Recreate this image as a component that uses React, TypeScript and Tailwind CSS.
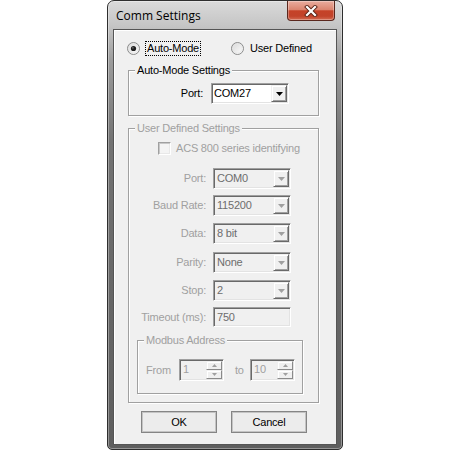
import React from "react";

function Radio({ checked, id }: { checked: boolean; id: string }) {
  return (
    <svg width="13" height="13" viewBox="0 0 13 13" className="shrink-0">
      <defs>
        <linearGradient id={id} x1="0" y1="0" x2="1" y2="1">
          <stop offset="0" stopColor="#d6d6d6" />
          <stop offset="1" stopColor="#ffffff" />
        </linearGradient>
      </defs>
      <circle cx="6.5" cy="6.5" r="6" fill={`url(#${id})`} stroke="#8a8b8b" />
      <circle cx="6.5" cy="6.5" r="4.6" fill="none" stroke="#e6e6e6" strokeWidth="0.8" />
      {checked && <circle cx="6.5" cy="6.5" r="2.6" fill="#1e1e1e" />}
      {checked && <circle cx="5.9" cy="5.8" r="0.9" fill="#6a6a6a" />}
    </svg>
  );
}

function Tri({ color, w = 7, h = 4 }: { color: string; w?: number; h?: number }) {
  return (
    <svg width={w} height={h} viewBox={`0 0 ${w} ${h}`}>
      <polygon points={`0,0 ${w},0 ${w / 2},${h}`} fill={color} />
    </svg>
  );
}

function TriUp({ color }: { color: string }) {
  return (
    <svg width="5" height="3" viewBox="0 0 5 3">
      <polygon points="0,3 5,3 2.5,0" fill={color} />
    </svg>
  );
}

function DropBtn({ enabled }: { enabled: boolean }) {
  return (
    <div className="w-[16px] h-full shrink-0 flex items-center justify-center bg-[#f0f0f0] border border-t-[#f0f0f0] border-l-[#f0f0f0] border-r-[#696969] border-b-[#696969] shadow-[inset_1px_1px_0_#ffffff,inset_-1px_-1px_0_#a0a0a0]">
      <Tri color={enabled ? "#000000" : "#a0a0a0"} />
    </div>
  );
}

function Combo({ value, enabled }: { value: string; enabled: boolean }) {
  return (
    <div
      className={
        enabled
          ? "flex h-[21px] w-[78px] shrink-0 border border-t-[#a0a0a0] border-l-[#a0a0a0] border-r-white border-b-white shadow-[inset_1px_1px_0_#696969,inset_-1px_-1px_0_#e3e3e3] p-[1px] bg-white"
          : "flex h-[21px] w-[78px] shrink-0 border border-t-[#a0a0a0] border-l-[#a0a0a0] border-r-white border-b-white shadow-[inset_1px_1px_0_#696969,inset_-1px_-1px_0_#e3e3e3] p-[1px] bg-[#f0f0f0]"
      }
    >
      <span
        className={
          enabled
            ? "flex-1 pl-[1px] leading-[17px] text-black"
            : "flex-1 pl-[2px] leading-[17px] text-[#6d6d6d]"
        }
      >
        {value}
      </span>
      <DropBtn enabled={enabled} />
    </div>
  );
}

function Edit({ value }: { value: string }) {
  return (
    <div className="flex h-[20px] w-[78px] shrink-0 border border-t-[#a0a0a0] border-l-[#a0a0a0] border-r-white border-b-white shadow-[inset_1px_1px_0_#696969,inset_-1px_-1px_0_#e3e3e3] p-[1px] bg-[#f0f0f0]">
      <span className="flex-1 pl-[2px] leading-[16px] text-[#6d6d6d]">{value}</span>
    </div>
  );
}

function SpinBtn({ up }: { up: boolean }) {
  return (
    <div className="h-[9px] w-full flex items-center justify-center bg-[#f0f0f0] border border-t-[#f0f0f0] border-l-[#f0f0f0] border-r-[#8a8a8a] border-b-[#8a8a8a] shadow-[inset_1px_1px_0_#ffffff]">
      {up ? <TriUp color="#a0a0a0" /> : <Tri color="#a0a0a0" w={5} h={3} />}
    </div>
  );
}

function Spin({ value }: { value: string }) {
  return (
    <div className="flex h-[22px] w-[45px] shrink-0 border border-t-[#a0a0a0] border-l-[#a0a0a0] border-r-white border-b-white shadow-[inset_1px_1px_0_#696969,inset_-1px_-1px_0_#e3e3e3] p-[1px] bg-[#f0f0f0]">
      <span className="flex-1 pl-[2px] leading-[17px] text-[#a0a0a0]">{value}</span>
      <div className="w-[16px] h-full flex flex-col bg-white">
        <SpinBtn up />
        <SpinBtn up={false} />
      </div>
    </div>
  );
}

function Button({ label }: { label: string }) {
  return (
    <div className="h-[22px] w-[76px] flex items-center justify-center border border-[#858585] bg-[#ececec] shadow-[inset_0_0_0_1px_#c4c4c4] text-black">
      {label}
    </div>
  );
}

function Row({ label, children, mt }: { label: string; children: React.ReactNode; mt: string }) {
  return (
    <div className={`flex items-center ${mt}`}>
      <span className="w-[77px] text-right text-[#a0a0a0] whitespace-nowrap">{label}</span>
      <div className="ml-[7px]">{children}</div>
    </div>
  );
}

export default function App() {
  return (
    <div className="w-[450px] h-[450px] bg-white font-['Liberation_Sans',Arial,sans-serif] text-[11px] leading-[13px] tracking-[-0.2px]">
      <div className="ml-[107px] w-[236px] h-[450px] flex flex-col px-[5px] pb-[4px] border border-[#2e2e2e] rounded-t-[7px] rounded-b-[5px] bg-[linear-gradient(180deg,#dadada_0px,#c6c6c6_24px,#9c9c9c_60px,#737373_140px,#666666_300px,#5e5e5e_450px)] shadow-[inset_0_0_0_1px_rgba(255,255,255,0.35)]">
        {/* Title bar */}
        <div className="h-[28px] flex items-start shrink-0">
          <span className="ml-[3px] mt-[7px] font-['Open_Sans',sans-serif] text-[12px] leading-[16px] tracking-normal text-black">
            Comm Settings
          </span>
          <div className="ml-auto mr-[2px] w-[48px] h-[20px] flex items-center justify-center border border-t-0 border-[#5a271d] rounded-b-[4px] bg-[linear-gradient(180deg,#e9ad9f_0%,#db8570_45%,#c54228_52%,#c2432a_80%,#d46b52_100%)] shadow-[inset_0_0_0_1px_rgba(255,255,255,0.3)]">
            <svg width="14" height="12" viewBox="0 0 14 12">
              <path d="M3 2 L11 10 M11 2 L3 10" stroke="#5a2418" strokeWidth="4" strokeLinecap="square" />
              <path d="M3 2 L11 10 M11 2 L3 10" stroke="#ffffff" strokeWidth="2.2" strokeLinecap="square" />
            </svg>
          </div>
        </div>

        {/* Client area */}
        <div className="flex-1 flex flex-col border border-[#555555] bg-[#f0f0f0] shadow-[inset_1px_1px_0_#ffffff]">
          {/* Radios */}
          <div className="mt-[10px] h-[16px] pl-[13px] flex items-center">
            <div className="w-[104px] flex items-center">
              <Radio checked id="rg1" />
              <span className="ml-[5px] px-[1px] border border-dotted border-black text-black leading-[13px]">
                Auto-Mode
              </span>
            </div>
            <div className="flex items-center">
              <Radio checked={false} id="rg2" />
              <span className="ml-[6px] text-black">User Defined</span>
            </div>
          </div>

          {/* Auto-Mode Settings */}
          <div className="relative mt-[14px] ml-[14px] w-[191px] h-[46px] shrink-0 border border-[#a0a0a0] shadow-[inset_1px_1px_0_#ffffff,1px_1px_0_#ffffff]">
            <span className="absolute left-[6px] top-[-7px] px-[2px] bg-[#f0f0f0] text-black whitespace-nowrap">
              Auto-Mode Settings
            </span>
            <div className="pt-[12px] flex items-center">
              <span className="w-[74px] text-right text-black">Port:</span>
              <div className="ml-[8px]">
                <Combo value="COM27" enabled />
              </div>
            </div>
          </div>

          {/* User Defined Settings */}
          <div className="relative mt-[12px] ml-[14px] w-[191px] h-[275px] shrink-0 border border-[#a0a0a0] shadow-[inset_1px_1px_0_#ffffff,1px_1px_0_#ffffff]">
            <span className="absolute left-[6px] top-[-7px] px-[2px] bg-[#f0f0f0] text-[#a0a0a0] whitespace-nowrap">
              User Defined Settings
            </span>
            <div className="pt-[13px] pl-[29px] h-[26px] flex items-end">
              <div className="h-[13px] flex items-center">
                <div className="w-[13px] h-[13px] shrink-0 border border-t-[#a0a0a0] border-l-[#a0a0a0] border-r-white border-b-white shadow-[inset_1px_1px_0_#c8c8c8,inset_-1px_-1px_0_#e8e8e8] bg-[#f4f4f4]" />
                <span className="ml-[5px] text-[#a0a0a0] whitespace-nowrap">ACS 800 series identifying</span>
              </div>
            </div>
            <Row label="Port:" mt="mt-[13px]">
              <Combo value="COM0" enabled={false} />
            </Row>
            <Row label="Baud Rate:" mt="mt-[6px]">
              <Combo value="115200" enabled={false} />
            </Row>
            <Row label="Data:" mt="mt-[7px]">
              <Combo value="8 bit" enabled={false} />
            </Row>
            <Row label="Parity:" mt="mt-[8px]">
              <Combo value="None" enabled={false} />
            </Row>
            <Row label="Stop:" mt="mt-[7px]">
              <Combo value="2" enabled={false} />
            </Row>
            <Row label="Timeout (ms):" mt="mt-[6px]">
              <Edit value="750" />
            </Row>

            {/* Modbus Address */}
            <div className="relative mt-[13px] ml-[8px] w-[166px] h-[54px] border border-[#a0a0a0] shadow-[inset_1px_1px_0_#ffffff,1px_1px_0_#ffffff]">
              <span className="absolute left-[6px] top-[-7px] px-[2px] bg-[#f0f0f0] text-[#a0a0a0] whitespace-nowrap">
                Modbus Address
              </span>
              <div className="pt-[18px] pl-[8px] flex items-center">
                <span className="w-[33px] text-[#a0a0a0]">From</span>
                <Spin value="1" />
                <span className="ml-[11px] w-[15px] text-[#a0a0a0]">to</span>
                <Spin value="10" />
              </div>
            </div>
          </div>

          {/* Buttons */}
          <div className="mt-[8px] ml-[27px] flex gap-[14px]">
            <Button label="OK" />
            <Button label="Cancel" />
          </div>
        </div>
      </div>
    </div>
  );
}
